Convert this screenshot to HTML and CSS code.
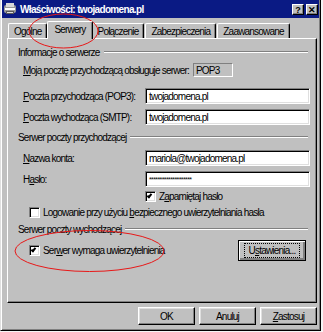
FILE: index.html
```html
<!DOCTYPE html>
<html lang="pl">
<head>
    <meta charset="UTF-8">
    <title>Właściwości: twojadomena.pl</title>
    <link rel="stylesheet" href="styles.css">
</head>
<body>
    <div class="window">
        <div class="titlebar">
            <svg class="app-icon" width="14" height="14" viewBox="0 0 14 14">
                <rect x="1" y="3" width="12" height="8" rx="2" fill="#9a9a9a"/>
                <rect x="3" y="1" width="8" height="4" fill="#d8d8d8"/>
                <rect x="2" y="6" width="10" height="2" fill="#ffffff"/>
                <rect x="3" y="9" width="8" height="3" fill="#5a5a5a"/>
                <rect x="4" y="10" width="6" height="1" fill="#e0e0e0"/>
            </svg>
            <span class="title">Właściwości: twojadomena.pl</span>
            <div class="title-buttons">
                <span class="tbtn">?</span>
                <span class="tbtn">✕</span>
            </div>
        </div>

        <div class="content">
            <div class="tabs">
                <div class="tab">Ogólne</div>
                <div class="tab active">Serwery</div>
                <div class="tab">Połączenie</div>
                <div class="tab">Zabezpieczenia</div>
                <div class="tab">Zaawansowane</div>
            </div>

            <div class="panel">
                <div class="group-title">Informacje o serwerze</div>
                <div class="row row-info">
                    <span class="label"><u>M</u>oją pocztę przychodzącą obsługuje serwer:</span>
                    <span class="field field-readonly">POP3</span>
                </div>
                <div class="row row-input first">
                    <span class="label"><u>P</u>oczta przychodząca (POP3):</span>
                    <span class="field">twojadomena.pl</span>
                </div>
                <div class="row row-input">
                    <span class="label"><u>P</u>oczta wychodząca (SMTP):</span>
                    <span class="field">twojadomena.pl</span>
                </div>

                <div class="group-title">Serwer poczty przychodzącej</div>
                <div class="row row-input first">
                    <span class="label"><u>N</u>azwa konta:</span>
                    <span class="field">mariola@twojadomena.pl</span>
                </div>
                <div class="row row-input">
                    <span class="label">H<u>a</u>sło:</span>
                    <span class="field field-pass">********************</span>
                </div>
                <div class="row row-check indent">
                    <span class="checkbox checked"></span>
                    <span>Z<u>a</u>pamiętaj hasło</span>
                </div>
                <div class="row row-check">
                    <span class="checkbox"></span>
                    <span>Logowanie przy użyciu <u>b</u>ezpiecznego uwierzytelniania hasła</span>
                </div>

                <div class="group-title">Serwer poczty wychodzącej</div>
                <div class="row row-auth">
                    <span class="checkbox checked"></span>
                    <span>Ser<u>w</u>er wymaga uwierzytelnienia</span>
                    <span class="button focus"><span>U<u>s</u>tawienia...</span></span>
                </div>
            </div>

            <div class="buttons">
                <span class="button">OK</span>
                <span class="button">Anuluj</span>
                <span class="button"><u>Z</u>astosuj</span>
            </div>
        </div>

        <svg class="marks" width="321" height="331" viewBox="0 0 321 331">
            <ellipse cx="62.5" cy="31" rx="34.5" ry="17" fill="none" stroke="#e81818" stroke-width="1"/>
            <ellipse cx="88.5" cy="251" rx="74.5" ry="20.5" fill="none" stroke="#e81818" stroke-width="1"/>
        </svg>
    </div>
</body>
</html>
```

FILE: styles.css
```css
html{
    box-sizing: border-box;
}

*,
*:after,
*:before{
    box-sizing: inherit;
}

body{
    margin: 0;
    background-color: #f4f4f4;
    font-family: "Liberation Sans", Arial, sans-serif;
    font-size: 10px;
    letter-spacing: -0.8px;
    color: #000;
}

u{
    text-decoration: underline;
}

.window{
    position: relative;
    width: 321px;
    height: 331px;
    padding: 0 1px 1px 1px;
    background-color: #c0c0c0;
    border-left: 1px solid #dfdfdf;
    border-right: 1px solid #000;
    border-bottom: 1px solid #000;
    box-shadow: inset 1px 0 #fff, inset -1px -1px #808080;
}

/* barra de titulo */
.titlebar{
    height: 18px;
    display: flex;
    align-items: center;
    background-color: #0a1a84;
    color: #fff;
    padding: 0 1px 0 1px;
}

.app-icon{
    margin-right: 3px;
}

.title{
    font-weight: bold;
    font-size: 10px;
    letter-spacing: -0.65px;
}

.title-buttons{
    margin-left: auto;
    display: flex;
    gap: 2px;
    margin-top: 1px;
}

.tbtn{
    width: 12px;
    height: 11px;
    display: flex;
    align-items: center;
    justify-content: center;
    background-color: #c0c0c0;
    color: #000;
    font-weight: bold;
    font-size: 9px;
    letter-spacing: 0;
    border-top: 1px solid #fff;
    border-left: 1px solid #fff;
    border-right: 1px solid #000;
    border-bottom: 1px solid #000;
    box-shadow: inset -1px -1px #808080;
}

.content{
    padding: 0 2px 0 5px;
}

/* pestañas */
.tabs{
    display: flex;
    height: 17px;
    margin-top: 3px;
    padding-left: 1px;
    align-items: flex-end;
}

.tab{
    height: 15px;
    padding: 0 5px;
    display: flex;
    align-items: center;
    border-top: 1px solid #fff;
    border-left: 1px solid #fff;
    border-right: 1px solid #000;
    border-radius: 2px 2px 0 0;
    box-shadow: inset -1px 0 #808080;
    margin-right: 1px;
}

.tab.active{
    position: relative;
    z-index: 1;
    height: 18px;
    margin: 0 -1px -1px -1px;
    padding: 0 6px 2px;
    background-color: #c0c0c0;
}

.panel{
    height: 265px;
    padding: 6px 6px 0 10px;
    border-top: 1px solid #fff;
    border-left: 1px solid #fff;
    border-right: 1px solid #000;
    border-bottom: 1px solid #000;
    box-shadow: inset -1px -1px #808080;
}

.group-title{
    height: 14px;
    display: flex;
    align-items: center;
    margin-right: 2px;
}

.group-title:after{
    content: "";
    flex: 1;
    height: 2px;
    margin-left: 4px;
    border-top: 1px solid #808080;
    border-bottom: 1px solid #fff;
}

.group-title + .row{
    margin-top: 4px;
}

.row{
    display: flex;
    align-items: center;
    padding-left: 5px;
}

.label{
    width: 122px;
    flex-shrink: 0;
    white-space: nowrap;
}

.row-info{
    height: 14px;
    margin-bottom: 11px;
}

.row-info .label{
    width: 170px;
}

.field{
    height: 16px;
    width: 166px;
    display: flex;
    align-items: center;
    padding-left: 3px;
    background-color: #fff;
    border-top: 1px solid #808080;
    border-left: 1px solid #808080;
    border-right: 1px solid #fff;
    border-bottom: 1px solid #fff;
    box-shadow: inset 1px 1px #000, inset -1px -1px #dfdfdf;
}

.field-readonly{
    width: 40px;
    height: 14px;
    background-color: #c0c0c0;
    box-shadow: none;
    border-color: #808080 #fff #fff #808080;
    padding-left: 2px;
}

.field-pass{
    font-size: 7px;
    letter-spacing: -0.6px;
    padding-top: 1px;
}

.row-input{
    height: 16px;
    margin-bottom: 5px;
}

.group-title + .row-input.first{
    margin-top: 6px;
}

.row-check{
    height: 13px;
    margin-top: 3px;
    padding-left: 11px;
}

.row-input + .row-check{
    margin-top: -2px;
}

.row-check.indent{
    padding-left: 127px;
}

.row-check + .group-title{
    margin-top: 3px;
}

.checkbox{
    width: 11px;
    height: 11px;
    margin-right: 3px;
    flex-shrink: 0;
    background-color: #fff;
    border-top: 1px solid #808080;
    border-left: 1px solid #808080;
    border-right: 1px solid #fff;
    border-bottom: 1px solid #fff;
    box-shadow: inset 1px 1px #000, inset -1px -1px #dfdfdf;
    position: relative;
}

.checkbox.checked:after{
    content: "";
    position: absolute;
    left: 2px;
    top: 1px;
    width: 3px;
    height: 5px;
    border-right: 2px solid #000;
    border-bottom: 2px solid #000;
    transform: rotate(40deg);
}

.row-auth{
    height: 21px;
    margin-top: 3px;
    padding-left: 11px;
}

.button{
    height: 18px;
    width: 57px;
    display: flex;
    align-items: center;
    justify-content: center;
    border-top: 1px solid #fff;
    border-left: 1px solid #fff;
    border-right: 1px solid #000;
    border-bottom: 1px solid #000;
    box-shadow: inset -1px -1px #808080, inset 1px 1px #dfdfdf;
}

.button.focus{
    margin-left: auto;
    margin-right: 4px;
    width: 68px;
    height: 21px;
    border: 1px solid #000;
    box-shadow: inset 1px 1px #fff, inset -2px -2px #808080, inset -1px -1px #000;
}

.button.focus span{
    padding: 1px 4px;
    outline: 1px dotted #000;
    outline-offset: 0;
}

.buttons{
    display: flex;
    justify-content: flex-end;
    gap: 4px;
    margin-top: 4px;
}

.marks{
    position: absolute;
    left: 0;
    top: 0;
    pointer-events: none;
}
```
